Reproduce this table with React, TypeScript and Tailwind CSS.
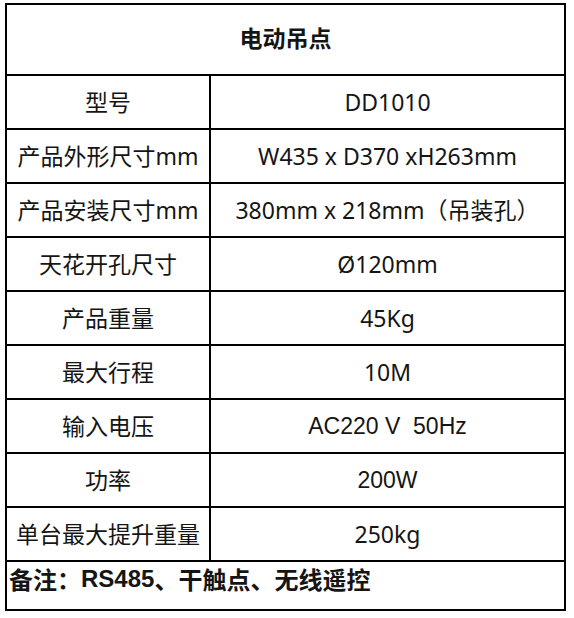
import React from "react";

const rows: { label: string; value: React.ReactNode; arial?: boolean }[] = [
  { label: "型号", value: "DD1010" },
  { label: "产品外形尺寸mm", value: "W435 x D370 xH263mm" },
  { label: "产品安装尺寸mm", value: "380mm x 218mm（吊装孔）" },
  { label: "天花开孔尺寸", value: "Ø120mm" },
  { label: "产品重量", value: "45Kg" },
  { label: "最大行程", value: "10M" },
  { label: "输入电压", value: "AC220 V\u00a0 50Hz", arial: true },
  { label: "功率", value: "200W", arial: true },
  { label: "单台最大提升重量", value: "250kg" },
];

export default function App() {
  return (
    <div className="bg-white w-[574px] h-[618px] pt-[3px] pl-[5px] text-[#151515]">
      <div className="w-[561px] border-2 border-black">
        <div
          className="h-[71px] border-b-2 border-black flex items-center justify-center pb-[2px] text-[23px] font-bold"
          style={{ fontFamily: '"Noto Sans", "Noto Sans CJK SC", sans-serif' }}
        >
          电动吊点
        </div>
        {rows.map((r) => (
          <div
            key={r.label}
            className="h-[54px] border-b-2 border-black grid grid-cols-[204px_1fr] text-[23px]"
          >
            <div
              className="border-r-2 border-black flex items-center justify-center whitespace-nowrap"
              style={{ fontFamily: '"Noto Sans", "Noto Sans CJK SC", sans-serif' }}
            >
              {r.label}
            </div>
            <div
              className={
                "flex items-center justify-center whitespace-nowrap " +
                (r.arial
                  ? "font-['Liberation_Sans','Noto_Sans_CJK_SC',sans-serif]"
                  : "font-['Noto_Sans','Noto_Sans_CJK_SC',sans-serif]")
              }
            >
              {r.value}
            </div>
          </div>
        ))}
        <div
          className="h-[47px] flex items-center pl-[2px] pb-[13px] text-[24px] font-bold whitespace-nowrap"
          style={{ fontFamily: '"Noto Sans CJK SC", sans-serif' }}
        >
          备注：
          <span className="font-['Liberation_Sans',sans-serif]">RS485</span>
          、干触点、无线遥控
        </div>
      </div>
    </div>
  );
}
